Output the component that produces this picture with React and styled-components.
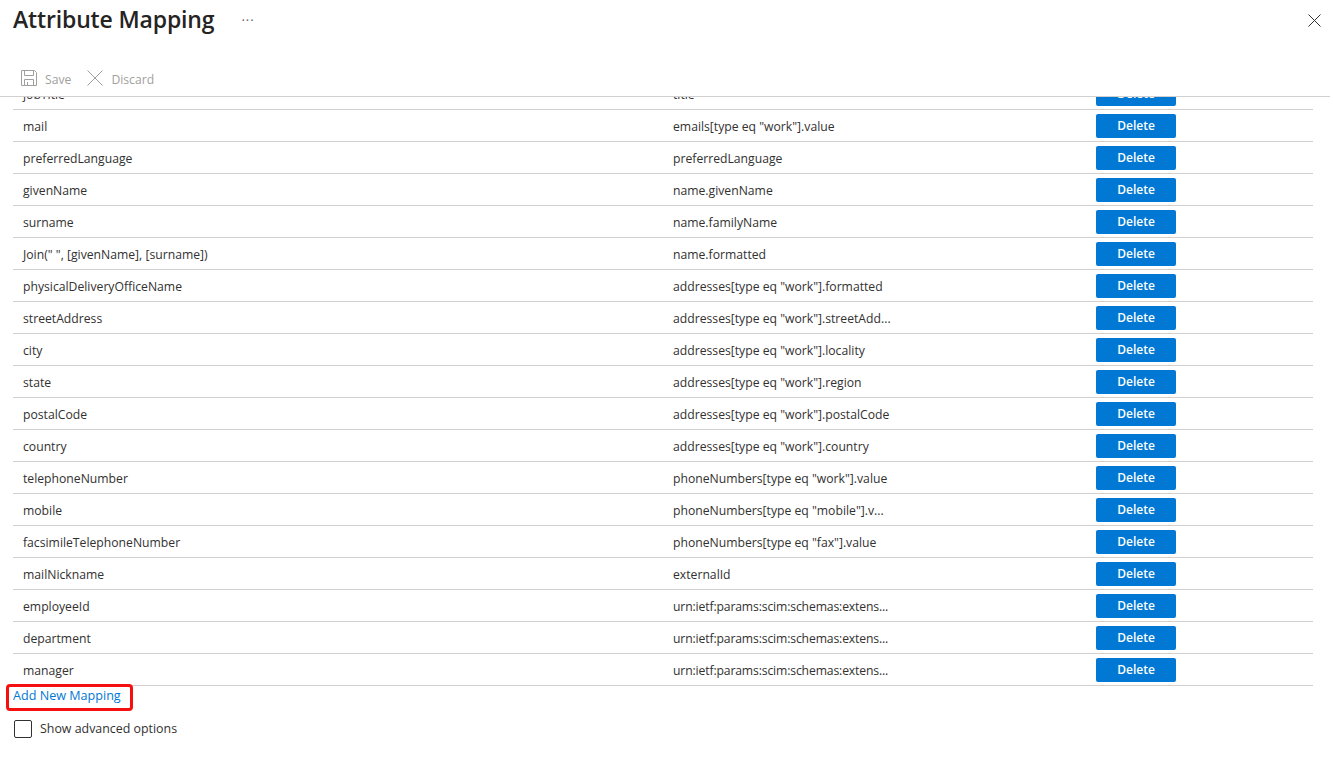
import React from 'react';
import styled, {createGlobalStyle} from 'styled-components';

const GlobalStyle = createGlobalStyle`
  html, body {
    margin: 0;
    padding: 0;
    background: #fff;
    font-family: "Open Sans", "Noto Sans", "Liberation Sans", sans-serif;
    color: #323130;
  }
`;

const Page = styled.div`
  width: 1333px;
  height: 761px;
  display: flex;
  flex-direction: column;
  overflow: hidden;
`;

const Header = styled.div`
  height: 40px;
  box-sizing: border-box;
  display: flex;
  align-items: center;
  padding: 0 12px 0 13px;
`;

const Title = styled.h1`
  margin: 0 0 2px;
  font-size: 23px;
  font-weight: 600;
  line-height: 38px;
  color: #252423;
  letter-spacing: -0.15px;
`;

const More = styled.span`
  margin-left: 27px;
  font-size: 13px;
  letter-spacing: 1px;
  line-height: 1;
  color: #605e5c;
`;

const CloseButton = styled.button`
  margin-left: auto;
  width: 13px;
  height: 13px;
  padding: 0;
  border: 0;
  background: none;
  display: flex;
`;

const Toolbar = styled.div`
  height: 57px;
  width: 1330px;
  box-sizing: border-box;
  padding: 30px 0 0 20px;
  display: flex;
  align-items: flex-start;
  border-bottom: 1px solid #d2d0ce;
`;

const ToolItem = styled.div`
  display: flex;
  align-items: center;
  gap: 8px;
  margin-right: 16px;
  font-size: 12.2px;
  line-height: 20px;
  color: #a19f9d;
  svg {
    margin-top: -4px;
  }
`;

const Viewport = styled.div`
  height: 589px;
  margin: 0 20px 0 13px;
  display: flex;
  flex-direction: column;
  justify-content: flex-end;
  overflow: hidden;
`;

const Row = styled.div`
  flex: 0 0 32px;
  box-sizing: border-box;
  display: grid;
  grid-template-columns: 650px 423px 80px;
  align-items: center;
  padding-left: 10px;
  border-bottom: 1px solid #d2d0ce;
  font-size: 12.2px;
  color: #323130;
`;

const Cell = styled.div`
  white-space: nowrap;
  padding-top: 2px;
  letter-spacing: ${props => (props.$tight ? '-0.14px' : 'normal')};
`;

const DeleteButton = styled.button`
  width: 80px;
  height: 24px;
  padding: 0 0 1px;
  border: 0;
  border-radius: 2px;
  background: #0078d4;
  color: #fff;
  font-family: inherit;
  font-size: 12px;
  font-weight: 600;
`;

const Footer = styled.div`
  padding: 3px 0 0 13px;
  display: flex;
  flex-direction: column;
  align-items: flex-start;
`;

const AddLink = styled.a`
  position: relative;
  font-size: 12.6px;
  line-height: 14px;
  color: #0078d4;
  &::after {
    content: "";
    position: absolute;
    left: -7px;
    right: -12px;
    top: -5px;
    bottom: -8px;
    border: 3px solid #f5100f;
    border-radius: 4px;
  }
`;

const CheckRow = styled.label`
  margin: 17px 0 0 1px;
  display: flex;
  align-items: center;
  gap: 8px;
  font-size: 12.4px;
  line-height: 18px;
  color: #323130;
`;

const CheckBox = styled.span`
  width: 16px;
  height: 16px;
  border: 1px solid #323130;
  border-radius: 2px;
`;

const rows = [
  ['jobTitle', 'title'],
  ['mail', 'emails[type eq "work"].value'],
  ['preferredLanguage', 'preferredLanguage'],
  ['givenName', 'name.givenName'],
  ['surname', 'name.familyName'],
  ['Join(" ", [givenName], [surname])', 'name.formatted'],
  ['physicalDeliveryOfficeName', 'addresses[type eq "work"].formatted'],
  ['streetAddress', 'addresses[type eq "work"].streetAdd...'],
  ['city', 'addresses[type eq "work"].locality'],
  ['state', 'addresses[type eq "work"].region'],
  ['postalCode', 'addresses[type eq "work"].postalCode'],
  ['country', 'addresses[type eq "work"].country'],
  ['telephoneNumber', 'phoneNumbers[type eq "work"].value'],
  ['mobile', 'phoneNumbers[type eq "mobile"].v...'],
  ['facsimileTelephoneNumber', 'phoneNumbers[type eq "fax"].value'],
  ['mailNickname', 'externalId'],
  ['employeeId', 'urn:ietf:params:scim:schemas:extens...'],
  ['department', 'urn:ietf:params:scim:schemas:extens...'],
  ['manager', 'urn:ietf:params:scim:schemas:extens...'],
];

const SaveIcon = () => (
  <svg width="17" height="16" viewBox="0 0 17 16" fill="none" stroke="#a19f9d" strokeWidth="1">
    <path d="M1.5.5h13l2 2v13h-15z" />
    <path d="M4.5.5v5h9v-5" />
    <path d="M4.5 15.5v-6h9v6M7.5 12v3.5" />
  </svg>
);

const DiscardIcon = () => (
  <svg width="16" height="16" viewBox="0 0 16 16" fill="none" stroke="#a19f9d" strokeWidth="1">
    <path d="M.5.5l15 15M15.5.5l-15 15" />
  </svg>
);

const CloseIcon = () => (
  <svg width="13" height="13" viewBox="0 0 13 13" fill="none" stroke="#323130" strokeWidth="1">
    <path d="M.5.5l12 12M12.5.5l-12 12" />
  </svg>
);

export default function App() {
  return (
    <Page>
      <GlobalStyle />
      <Header>
        <Title>Attribute Mapping</Title>
        <More>···</More>
        <CloseButton><CloseIcon /></CloseButton>
      </Header>
      <Toolbar>
        <ToolItem><SaveIcon />Save</ToolItem>
        <ToolItem><DiscardIcon />Discard</ToolItem>
      </Toolbar>
      <Viewport>
        {rows.map(([source, target]) => (
          <Row key={source}>
            <Cell>{source}</Cell>
            <Cell $tight={target.startsWith('urn')}>{target}</Cell>
            <DeleteButton>Delete</DeleteButton>
          </Row>
        ))}
      </Viewport>
      <Footer>
        <AddLink>Add New Mapping</AddLink>
        <CheckRow><CheckBox />Show advanced options</CheckRow>
      </Footer>
    </Page>
  );
}
